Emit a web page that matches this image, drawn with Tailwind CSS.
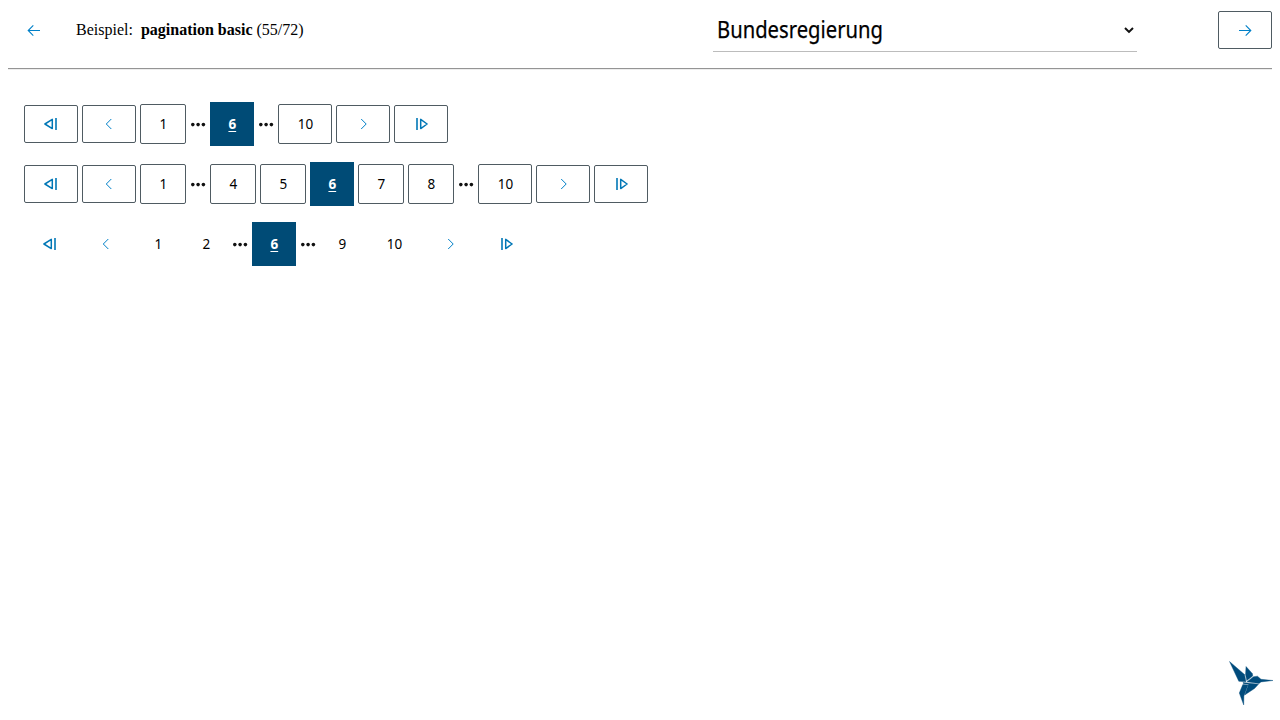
<!DOCTYPE html>
<html lang="de">
<head>
<meta charset="utf-8">
<title>pagination basic</title>
<script src="https://cdn.jsdelivr.net/npm/@tailwindcss/browser@4"></script>
</head>
<body class="h-screen overflow-hidden bg-white text-black">
<svg class="hidden">
  <defs>
    <symbol id="first" viewBox="0 0 16 16"><path d="M9.3 3.4v9.2L1.9 8z" fill="none" stroke="#0077b6" stroke-width="1.5" stroke-linejoin="round"/><path d="M13 2v12" stroke="#0077b6" stroke-width="1.6"/></symbol>
    <symbol id="last" viewBox="0 0 16 16"><path d="M7.7 3.4v9.2L14.1 8z" fill="none" stroke="#0077b6" stroke-width="1.5" stroke-linejoin="round"/><path d="M4 2v12" stroke="#0077b6" stroke-width="1.6"/></symbol>
    <symbol id="prev" viewBox="0 0 16 16"><path d="M10.3 3l-5 5 5 5" fill="none" stroke="#0080c8" stroke-width="1"/></symbol>
    <symbol id="next" viewBox="0 0 16 16"><path d="M6.2 3l5 5-5 5" fill="none" stroke="#0080c8" stroke-width="1"/></symbol>
    <symbol id="dots" viewBox="0 0 16 16"><g fill="#111"><circle cx="2.8" cy="8.6" r="1.8"/><circle cx="8.1" cy="8.6" r="1.8"/><circle cx="13.4" cy="8.6" r="1.8"/></g></symbol>
  </defs>
</svg>
<header class="mx-2 flex h-[70px] items-start border-b border-[#ededed]">
  <div class="flex h-[69px] w-full items-start border-b border-[#949494]">
    <a class="mt-[11px] flex h-[38px] w-[52px] items-center justify-center"><svg class="size-4" viewBox="0 0 16 16" fill="none" stroke="#0080c8" stroke-width="1.1"><path d="M14 8.5H2.3M7.3 3.4L2.2 8.5l5.1 5.1"/></svg></a>
    <p class="mt-[18px] ml-4 w-[637px] font-['Liberation_Serif',serif] text-base whitespace-pre">Beispiel:  <b>pagination basic</b> (55/72)</p>
    <div class="flex h-[52px] w-[424px] items-center justify-between border-b border-[#bcbcbc] pt-2 pr-[3px] pl-1 font-['Noto_Sans',sans-serif] text-2xl">
      <span class="mb-0.5 origin-left scale-x-[.843] [-webkit-text-stroke:0.25px_black]">Bundesregierung</span>
      <svg class="h-2.5 w-2.5" viewBox="0 0 10 10"><path d="M1 3l4 3.9L9 3" fill="none" stroke="#111" stroke-width="2"/></svg>
    </div>
    <a class="mt-[11px] ml-auto flex h-[38px] w-[54px] items-center justify-center rounded-[2px] border border-[#4f5b62]"><svg class="size-4" viewBox="0 0 16 16" fill="none" stroke="#0080c8" stroke-width="1.1"><path d="M2 8.5h11.7M8.7 3.4l5.1 5.1-5.1 5.1"/></svg></a>
  </div>
</header>
<main class="mt-8 ml-6 flex flex-col gap-4 font-['Noto_Sans',sans-serif] text-[15px] [&_span]:mb-0.5 [&_span]:scale-x-90">
  <nav class="flex h-11 items-center gap-1 [&>a]:flex [&>a]:items-center [&>a]:justify-center">
    <a class="h-[38px] w-[54px] rounded-[2px] border border-[#4f5b62]"><svg class="size-4"><use href="#first"/></svg></a>
    <a class="h-[38px] w-[54px] rounded-[2px] border border-[#4f5b62]"><svg class="size-4"><use href="#prev"/></svg></a>
    <a class="h-10 w-[46px] rounded-[2px] border border-[#4f5b62]"><span>1</span></a>
    <svg class="size-4"><use href="#dots"/></svg>
    <a class="h-11 w-11 bg-[#004b76] font-bold text-white underline underline-offset-2"><span>6</span></a>
    <svg class="size-4"><use href="#dots"/></svg>
    <a class="h-10 w-[54px] rounded-[2px] border border-[#4f5b62] pl-px"><span>10</span></a>
    <a class="h-[38px] w-[54px] rounded-[2px] border border-[#4f5b62]"><svg class="size-4"><use href="#next"/></svg></a>
    <a class="h-[38px] w-[54px] rounded-[2px] border border-[#4f5b62]"><svg class="size-4"><use href="#last"/></svg></a>
  </nav>
  <nav class="flex h-11 items-center gap-1 [&>a]:flex [&>a]:items-center [&>a]:justify-center">
    <a class="h-[38px] w-[54px] rounded-[2px] border border-[#4f5b62]"><svg class="size-4"><use href="#first"/></svg></a>
    <a class="h-[38px] w-[54px] rounded-[2px] border border-[#4f5b62]"><svg class="size-4"><use href="#prev"/></svg></a>
    <a class="h-10 w-[46px] rounded-[2px] border border-[#4f5b62]"><span>1</span></a>
    <svg class="size-4"><use href="#dots"/></svg>
    <a class="h-10 w-[46px] rounded-[2px] border border-[#4f5b62]"><span>4</span></a>
    <a class="h-10 w-[46px] rounded-[2px] border border-[#4f5b62]"><span>5</span></a>
    <a class="h-11 w-11 bg-[#004b76] font-bold text-white underline underline-offset-2"><span>6</span></a>
    <a class="h-10 w-[46px] rounded-[2px] border border-[#4f5b62]"><span>7</span></a>
    <a class="h-10 w-[46px] rounded-[2px] border border-[#4f5b62]"><span>8</span></a>
    <svg class="size-4"><use href="#dots"/></svg>
    <a class="h-10 w-[54px] rounded-[2px] border border-[#4f5b62] pl-px"><span>10</span></a>
    <a class="h-[38px] w-[54px] rounded-[2px] border border-[#4f5b62]"><svg class="size-4"><use href="#next"/></svg></a>
    <a class="h-[38px] w-[54px] rounded-[2px] border border-[#4f5b62]"><svg class="size-4"><use href="#last"/></svg></a>
  </nav>
  <nav class="flex h-11 items-center gap-1 [&>a]:flex [&>a]:items-center [&>a]:justify-center">
    <a class="h-9 w-[52px]"><svg class="size-4"><use href="#first"/></svg></a>
    <a class="h-9 w-[52px]"><svg class="size-4"><use href="#prev"/></svg></a>
    <a class="h-10 w-11"><span>1</span></a>
    <a class="h-10 w-11"><span>2</span></a>
    <svg class="size-4"><use href="#dots"/></svg>
    <a class="h-11 w-11 bg-[#004b76] font-bold text-white underline underline-offset-2"><span>6</span></a>
    <svg class="size-4"><use href="#dots"/></svg>
    <a class="h-10 w-11"><span>9</span></a>
    <a class="h-10 w-[52px] pl-px"><span>10</span></a>
    <a class="h-9 w-[52px]"><svg class="size-4"><use href="#next"/></svg></a>
    <a class="h-9 w-[52px]"><svg class="size-4"><use href="#last"/></svg></a>
  </nav>
</main>
<svg class="fixed right-0 bottom-1.5 h-[60px] w-[60px]" viewBox="0 0 60 60" fill="#004b7c" stroke="#004b7c" stroke-width=".4">
  <path d="M9.500 7.500L24.500 20.500 26 27.700 18.800 27.300z"/>
  <path d="M26 12.500L32.500 19.700 32.700 22 26.800 26.500 25.500 20.500z"/>
  <path d="M27 27.700L33.500 22.700 37.500 22.200 41 25.300 53 26.500 41 27.900 39 29.500z"/>
  <path d="M23 28.400L38.500 30.200 34.500 34.500 24.700 41 28.500 30.300 23.500 29.800z"/>
  <path d="M22.800 30.600L28 30.900 23.900 42 23.700 51 19.300 39z"/>
</svg>
</body>
</html>
